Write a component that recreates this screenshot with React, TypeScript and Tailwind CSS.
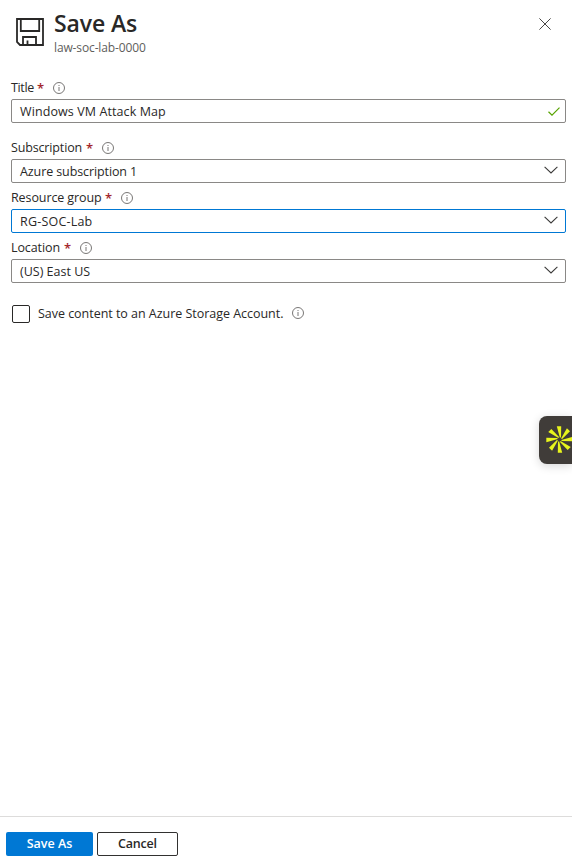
import React from "react";

function InfoIcon() {
  return (
    <svg className="block h-3 w-3 shrink-0" viewBox="0 0 12 12" fill="none">
      <circle cx="6" cy="6" r="5.5" stroke="#6a6866" strokeWidth="0.9" />
      <path d="M6 5v4M6 3v1" stroke="#6a6866" strokeWidth="0.9" />
    </svg>
  );
}

function Chevron() {
  return (
    <svg className="relative -top-px mr-[7px] block h-2 w-[14px] shrink-0" viewBox="0 0 14 8" fill="none">
      <path d="M.6 .8L7 7l6.400-6.200" stroke="#3b3a39" strokeWidth="1.1" />
    </svg>
  );
}

function Check() {
  return (
    <svg className="mr-[5px] block h-[9px] w-3 shrink-0" viewBox="0 0 12 9" fill="none">
      <path d="M.5 4.700L4 8.100 11.500.6" stroke="#57a300" strokeWidth="1.2" />
    </svg>
  );
}

type FieldProps = {
  label: string;
  labelClass: string;
  value: string;
  valueClass: string;
  active?: boolean;
  valid?: boolean;
};

function Field({ label, labelClass, value, valueClass, active, valid }: FieldProps) {
  return (
    <div className="flex flex-col">
      <div className="flex h-[22px] items-center pb-px">
        <span className={`shrink-0 whitespace-nowrap ${labelClass}`}>{label}</span>
        <span className="mr-[10px] ml-[3px] w-[6px] text-[13px] font-semibold text-[#a4262c]">*</span>
        <InfoIcon />
      </div>
      <div
        className={`flex h-6 items-center justify-between rounded-[2px] border pl-2 ${
          active ? "border-[#0078d4]" : "border-[#8a8886]"
        }`}
      >
        <span className={`pt-[2px] whitespace-nowrap ${valueClass}`}>{value}</span>
        {valid ? <Check /> : <Chevron />}
      </div>
    </div>
  );
}

const petals = [0, 45, 90, 135, 180, 225, 270, 315];

export default function App() {
  return (
    <div className="relative flex h-[866px] w-[572px] flex-col overflow-hidden bg-white font-['Segoe_UI','Open_Sans',sans-serif] text-[12.500px] leading-4 text-[#292827]">
      <header className="flex h-[77px] items-start pl-4">
        <svg className="mt-[18px] block h-7 w-7 shrink-0" viewBox="0 0 28 28" fill="none" stroke="#292827" strokeWidth="1.800">
          <path d="M1 1h26v26H4L1 24z" />
          <path d="M4.800 1v12h18.400V1M7 27v-8h13v8M11.500 27v-4.500" />
        </svg>
        <div className="ml-[10px] flex flex-col pt-[8px]">
          <h1 className="h-[31px] text-[23px] leading-[30px] font-semibold tracking-[-0.100px] whitespace-nowrap">Save As</h1>
          <span className="mt-px text-[12px] tracking-[-0.130px] whitespace-nowrap text-[#605e5c]">law-soc-lab-0000</span>
        </div>
        <svg className="mt-[18px] mr-[21px] ml-auto block h-3 w-3 shrink-0" viewBox="0 0 12 12" fill="none">
          <path d="M.4.400l11.200 11.200M11.600.4L.4 11.600" stroke="#484644" strokeWidth="1" />
        </svg>
      </header>

      <main className="flex flex-1 flex-col pr-[6px] pl-[11px]">
        <Field label="Title" labelClass="w-[23px] tracking-[-0.350px]" value="Windows VM Attack Map" valueClass="tracking-[0.100px]" valid />
        <div className="mt-[14px] flex flex-col gap-1">
          <Field label="Subscription" labelClass="w-[72px] tracking-[-0.150px]" value="Azure subscription 1" valueClass="tracking-[-0.100px]" />
          <Field label="Resource group" labelClass="w-[91px] tracking-[-0.100px]" value="RG-SOC-Lab" valueClass="tracking-[0.200px]" active />
          <Field label="Location" labelClass="w-[50px] tracking-[-0.100px]" value="(US) East US" valueClass="tracking-[0px]" />
        </div>
        <div className="mt-[22px] ml-px flex h-[18px] items-center">
          <span className="h-[18px] w-[18px] shrink-0 rounded-[2px] border border-[#292827]" />
          <span className="ml-2 w-[246px] whitespace-nowrap tracking-[-0.030px]">Save content to an Azure Storage Account.</span>
          <span className="relative -top-px ml-2"><InfoIcon /></span>
        </div>
      </main>

      <footer className="flex h-[50px] items-start gap-1 border-t border-[#dddcdb] pt-[15px] pl-[6px] font-semibold">
        <button className="h-6 w-[87px] rounded-[2px] bg-[#0078d4] tracking-[0px] text-white">Save As</button>
        <button className="h-6 w-[81px] rounded-[2px] border border-[#323130] tracking-[-0.200px]">Cancel</button>
      </footer>

      <div className="absolute top-[416px] right-0 flex h-12 w-[33px] items-center overflow-visible rounded-l-[8px] bg-[#403c39] pl-[7px] shadow-[0_2px_10px_rgba(0,0,0,0.16)]">
        <svg className="relative -top-px block h-[27px] w-[26px] shrink-0" viewBox="-13.500 -13.500 26 27" fill="#e8f51c">
          {petals.map((angle) => (
            <path key={angle} d="M-2.700-13.200L1.700-13.200 1.500-2.200.400-1.800z" transform={`rotate(${angle})`} />
          ))}
        </svg>
      </div>
    </div>
  );
}
